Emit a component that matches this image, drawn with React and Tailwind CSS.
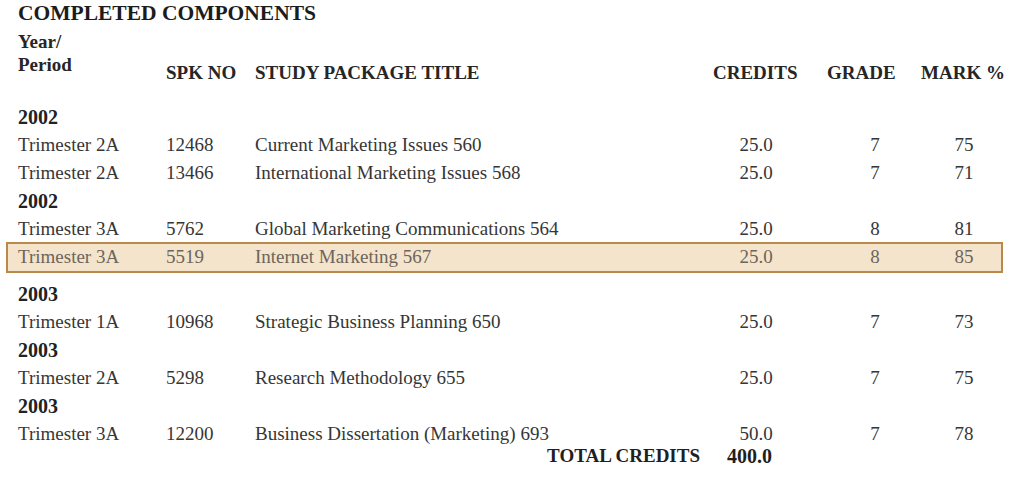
import React from "react";

const rows = [
    { year: "2002" },
    { period: "Trimester 2A", spk: "12468", title: "Current Marketing Issues 560", credits: "25.0", grade: "7", mark: "75" },
    { period: "Trimester 2A", spk: "13466", title: "International Marketing Issues 568", credits: "25.0", grade: "7", mark: "71" },
    { year: "2002" },
    { period: "Trimester 3A", spk: "5762", title: "Global Marketing Communications 564", credits: "25.0", grade: "8", mark: "81" },
    { period: "Trimester 3A", spk: "5519", title: "Internet Marketing 567", credits: "25.0", grade: "8", mark: "85", highlight: true },
    { year: "2003", gap: true },
    { period: "Trimester 1A", spk: "10968", title: "Strategic Business Planning 650", credits: "25.0", grade: "7", mark: "73" },
    { year: "2003" },
    { period: "Trimester 2A", spk: "5298", title: "Research Methodology 655", credits: "25.0", grade: "7", mark: "75" },
    { year: "2003" },
    { period: "Trimester 3A", spk: "12200", title: "Business Dissertation (Marketing) 693", credits: "50.0", grade: "7", mark: "78" },
];

function Cells({ row }) {
    return (
        <>
            <div className="w-[148px] shrink-0 whitespace-nowrap">{row.period}</div>
            <div className="w-[89px] shrink-0">{row.spk}</div>
            <div className="w-[441px] shrink-0 whitespace-nowrap">{row.title}</div>
            <div className="w-[120px] shrink-0 text-center">{row.credits}</div>
            <div className="w-[118px] shrink-0 text-center">{row.grade}</div>
            <div className="w-[60px] shrink-0 text-center">{row.mark}</div>
        </>
    );
}

export default function App() {
    return (
        <div className="w-[1010px] h-[478px] overflow-hidden bg-white text-[#363636] font-['Liberation_Serif','Times_New_Roman',serif]">
            <h1 className="h-[26px] pl-[18px] text-[21.5px] leading-[26px] font-bold text-[#1c1c1c]">
                COMPLETED COMPONENTS
            </h1>

            {/* column headings */}
            <div className="mt-[4px] flex pl-[18px] text-[19px] font-bold text-[#262626]">
                <div className="w-[148px] shrink-0 leading-[23px]">
                    <div>Year/</div>
                    <div>Period</div>
                </div>
                <div className="mt-[31px] flex leading-[23px] whitespace-nowrap">
                    <div className="w-[89px] shrink-0">SPK NO</div>
                    <div className="w-[458px] shrink-0">STUDY PACKAGE TITLE</div>
                    <div className="w-[114px] shrink-0">CREDITS</div>
                    <div className="w-[94px] shrink-0">GRADE</div>
                    <div className="shrink-0">MARK %</div>
                </div>
            </div>

            <div className="mt-[19px] text-[19px]">
                {rows.map((row, i) => {
                    if (row.year) {
                        return (
                            <div
                                key={i}
                                className={`h-[28px] pl-[18px] flex items-center text-[20px] font-bold text-[#222] ${row.gap ? "mt-[7px]" : ""}`}
                            >
                                {row.year}
                            </div>
                        );
                    }
                    if (row.highlight) {
                        return (
                            <div
                                key={i}
                                className="-mt-px ml-[6px] w-[997px] h-[31px] flex items-center pl-[10px] border-2 border-[#b9894a] bg-[#f3e4cb] text-[#6d655b]"
                            >
                                <Cells row={row} />
                            </div>
                        );
                    }
                    return (
                        <div key={i} className="h-[28px] pl-[18px] flex items-center">
                            <Cells row={row} />
                        </div>
                    );
                })}

                <div className="-mt-[3px] h-[22px] pl-[18px] flex items-center font-bold text-[#1f1f1f] whitespace-nowrap">
                    <div className="w-[682px] shrink-0 text-right">TOTAL CREDITS</div>
                    <div className="ml-[27px] shrink-0 text-[20px]">400.0</div>
                </div>
            </div>
        </div>
    );
}
